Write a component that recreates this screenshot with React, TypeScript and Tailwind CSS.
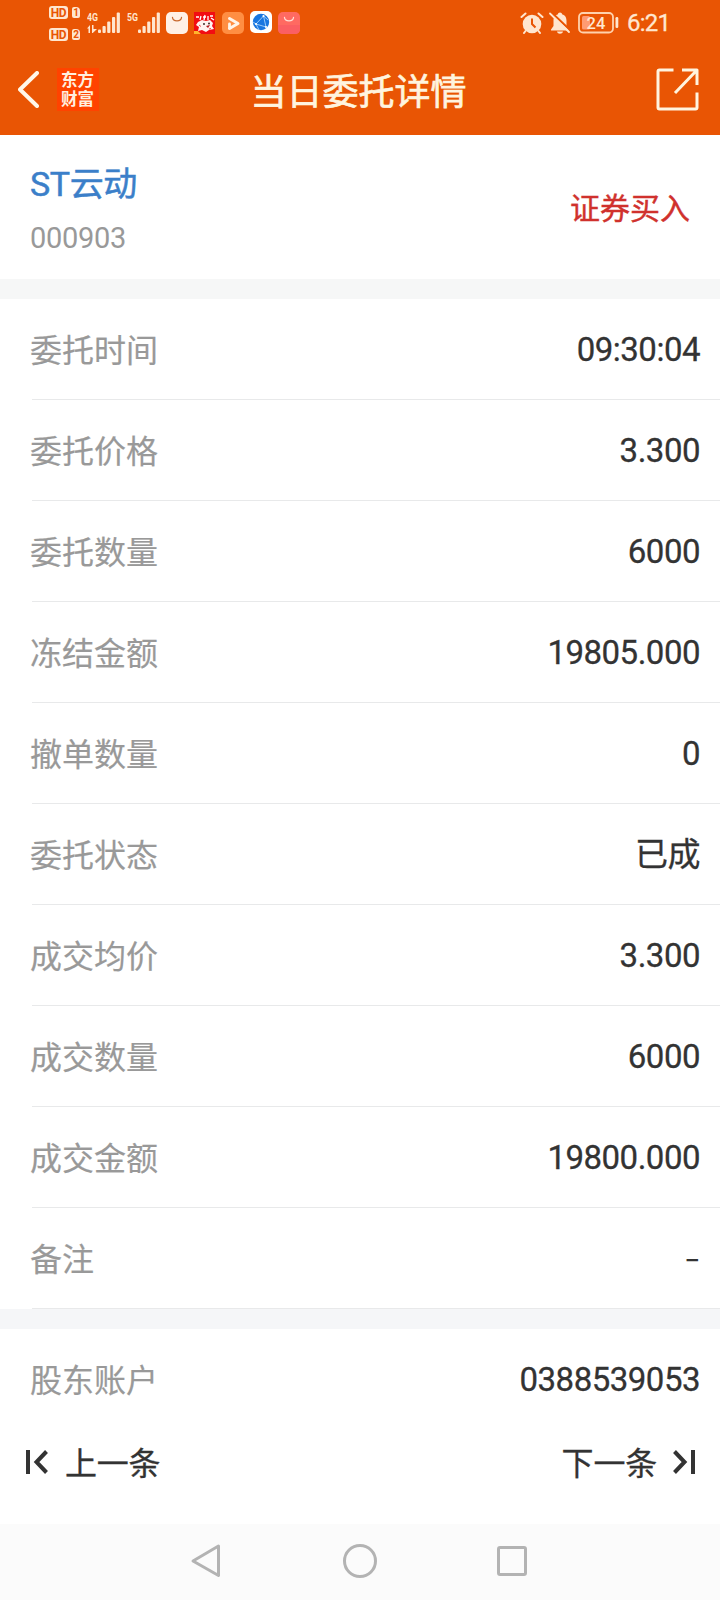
type DetailRow = { label: string; value: string };

const rows: DetailRow[] = [
  { label: "委托时间", value: "09:30:04" },
  { label: "委托价格", value: "3.300" },
  { label: "委托数量", value: "6000" },
  { label: "冻结金额", value: "19805.000" },
  { label: "撤单数量", value: "0" },
  { label: "委托状态", value: "已成" },
  { label: "成交均价", value: "3.300" },
  { label: "成交数量", value: "6000" },
  { label: "成交金额", value: "19800.000" },
  { label: "备注", value: "-" },
];

function HdBadge({ sim }: { sim: string }) {
  return (
    <div className="flex h-[13px] items-center gap-1 font-[Roboto,sans-serif] text-[#e95504]">
      <span className="flex h-[13px] w-[19px] items-center justify-center rounded-[3px] bg-[#ffe6cf] text-[12px] font-bold leading-none tracking-[-0.5px]">
        HD
      </span>
      <span className="flex h-[11px] w-2 items-center justify-center rounded-[2px] rounded-tr-[4px] bg-[#ffe6cf] text-[10px] font-bold leading-none">
        {sim}
      </span>
    </div>
  );
}

function Signal({ label, arrows }: { label: string; arrows?: boolean }) {
  return (
    <svg width="34" height="30" viewBox="0 -6 34 30" fill="#ffe6cf" className="-mt-1.5">
      <text x="0" y="8.500" fontFamily="Roboto, sans-serif" fontSize="11" fontWeight="700" textLength="11" lengthAdjust="spacingAndGlyphs">
        {label}
      </text>
      {arrows && <path d="M0 16.500L3 13V21H1.500V16.500ZM5 13H6.500V17H10L5.800 21H5Z" />}
      <rect x="11" y="17.500" width="3" height="3.500" rx="1" />
      <rect x="15.500" y="14" width="3.200" height="7" rx="1" />
      <rect x="20.200" y="9.500" width="3.200" height="11.500" rx="1" />
      <rect x="25" y="5" width="3.200" height="16" rx="1" />
      <rect x="29.700" y="0.500" width="3.200" height="20.500" rx="1" />
    </svg>
  );
}

function AppIcons() {
  return (
    <div className="flex gap-1.5">
      <svg width="22" height="22" viewBox="0 0 22 22">
        <rect width="22" height="22" rx="5" fill="#fff0e6" />
        <path d="M6.500 5.500C7 10 15 10 15.500 5.500" fill="none" stroke="#c9692f" strokeWidth="1.300" strokeLinecap="round" />
      </svg>
      <svg width="22" height="22" viewBox="0 0 22 22">
        <rect width="21" height="22" fill="#f20d12" />
        <path d="M2 5H5M7 4L6 8M9 5H12M11 3L10 8M14 4V8M16 4H19M17 6L20 8" stroke="#fff" strokeWidth="1.300" />
        <path d="M4 10L8 8L12 9L16 8L19 11L18 14L20 17L15 18L12 20L8 18L4 19L5 15L2 13Z" fill="#fff3f0" />
        <circle cx="10" cy="12" r="0.900" fill="#2b1715" />
        <circle cx="15" cy="11.500" r="0.900" fill="#2b1715" />
        <path d="M12 14L16 13L14 16Z" fill="#b3161b" />
        <path d="M5 13L7 14.500M15 17L17 16.500" stroke="#ed4b50" strokeWidth="1" />
        <path d="M0 19H4L7 22H0Z" fill="#ffb52b" />
      </svg>
      <svg width="22" height="22" viewBox="0 0 22 22">
        <rect width="22" height="22" rx="5" fill="#ff8e42" />
        <path d="M7.500 6.500L16 11.500L7.500 16.500" fill="none" stroke="#fff5e9" strokeWidth="3" strokeLinejoin="round" strokeLinecap="round" />
        <path d="M7.500 12V16" stroke="#fff5e9" strokeWidth="2.800" strokeLinecap="round" />
      </svg>
      <svg width="22" height="22" viewBox="0 0 22 22" className="-mt-px">
        <rect width="22" height="22" rx="5" fill="#fff" />
        <circle cx="11" cy="11" r="8.200" fill="#1976e0" />
        <path d="M6 13L13.500 5L16 16ZM3 11L6 13L9 19M13.500 5L18 9" fill="none" stroke="#b8deff" strokeWidth="0.800" />
        <g fill="#fff">
          <circle cx="6" cy="13" r="1.100" />
          <circle cx="13.500" cy="5" r="1.100" />
          <circle cx="16" cy="16" r="1.100" />
        </g>
      </svg>
      <svg width="22" height="22" viewBox="0 0 22 22">
        <rect width="22" height="22" rx="5" fill="#ff6a61" />
        <path d="M0 13H22V17Q22 22 17 22H5Q0 22 0 17Z" fill="#fb5f62" />
        <path d="M6.500 5.500C7 10 15 10 15.500 5.500" fill="none" stroke="#ffe0d4" strokeWidth="1.300" strokeLinecap="round" />
      </svg>
    </div>
  );
}

function StatusBar() {
  return (
    <div className="flex h-[46px] items-start justify-between pl-[49px] pr-[51px]">
      <div className="flex items-start">
        <div className="mt-1.5 flex flex-col gap-[9px]">
          <HdBadge sim="1" />
          <HdBadge sim="2" />
        </div>
        <div className="ml-[7px] mt-3 flex items-start gap-[6px]">
          <Signal label="4G" arrows />
          <Signal label="5G" />
        </div>
        <div className="ml-[5px] mt-3">
          <AppIcons />
        </div>
      </div>
      <div className="mt-3 flex items-start text-[#ffe6cf]">
        <svg width="24" height="22" viewBox="0 0 24 22" fill="none" stroke="#ffe6cf">
          <circle cx="12" cy="12" r="9.300" fill="#ffe6cf" stroke="none" />
          <path d="M1.500 5L5.500 1.500M22.500 5L18.500 1.500M5.500 19L4 21M18.500 19L20 21" strokeWidth="2" strokeLinecap="round" />
          <path d="M12 6.500V12L15.500 15.500" stroke="#e95504" strokeWidth="2" />
        </svg>
        <svg width="22" height="22" viewBox="0 0 22 22" className="ml-[5px]">
          <path d="M11 0.500C12.300 0.500 13 1.300 13 2.300C16.500 3.200 17.500 6 17.500 9V14L20 17.500V18.500H2V17.500L4.500 14V9C4.500 6 5.500 3.200 9 2.300C9 1.300 9.700 0.500 11 0.500ZM8 19.500H14C13.500 22.500 8.500 22.500 8 19.500Z" fill="#ffe6cf" />
          <path d="M2.500 0.500L22 19" stroke="#e95504" strokeWidth="2.200" />
          <path d="M1 1.500L20 20" stroke="#ffe6cf" strokeWidth="1.800" strokeLinecap="round" />
        </svg>
        <svg width="42" height="22" viewBox="0 0 42 22" className="ml-[7px]">
          <rect x="1" y="1" width="34" height="19.500" rx="4" fill="none" stroke="#ffd2ad" strokeWidth="1.800" />
          <rect x="4" y="4" width="8" height="13.500" rx="1.500" fill="#ff9b72" />
          <rect x="37.500" y="5" width="2.800" height="11" rx="1.300" fill="#ffe6cf" />
          <text x="8.500" y="16.500" fontFamily="Roboto, sans-serif" fontSize="16.500" fontWeight="500" fill="#ffe6cf">
            24
          </text>
        </svg>
        <span className="-mt-px ml-[7px] w-[42px] whitespace-nowrap font-[Roboto,sans-serif] text-[24px] leading-6 tracking-[-0.8px] [-webkit-text-stroke:0.3px]">6:21</span>
      </div>
    </div>
  );
}

function Header() {
  return (
    <header className="h-[135px] shrink-0 bg-[#e95504]">
      <StatusBar />
      <div className="grid h-[87px] grid-cols-[1fr_auto_1fr] items-center pl-[18px] pr-[21px]">
        <div className="flex items-center">
          <svg width="21" height="37" viewBox="0 0 21 37" fill="none" stroke="#fff8ea" strokeWidth="4" strokeLinecap="round" strokeLinejoin="round">
            <path d="M19 2L2 18.500L19 35" />
          </svg>
          <div className="ml-[18px] flex h-[43px] w-[42px] items-center justify-center bg-[#ff4300] pb-px pr-px">
            <span className="w-[33px] break-all text-[16.500px] font-bold leading-[19.500px] text-[#ffefdf]">东方财富</span>
          </div>
        </div>
        <h1 className="pb-0.5 text-[36px] leading-none text-[#fff4df] [-webkit-text-stroke:0.7px]">当日委托详情</h1>
        <svg width="43" height="43" viewBox="0 0 43 43" className="justify-self-end" fill="none" stroke="#fff4df" strokeWidth="3" strokeLinejoin="round">
          <path d="M17.500 2H3.500Q2 2 2 3.500V39.500Q2 41 3.500 41H39.500Q41 41 41 39.500V24.500" />
          <path d="M26 2H41V17M41 2L19 25" />
        </svg>
      </div>
    </header>
  );
}

function Value({ children }: { children: string }) {
  if (children === "-") {
    return <span className="origin-right scale-x-140 pb-1 text-[#333]">-</span>;
  }
  return (
    <span className="pt-[3px] font-[Roboto,'Noto_Sans_CJK_SC',sans-serif] text-[33px] tracking-[-0.5px] text-[#333] [-webkit-text-stroke:0.3px]">
      {children}
    </span>
  );
}

function Row({ label, value }: DetailRow) {
  return (
    <div className="flex h-[101px] flex-col">
      <div className="flex flex-1 items-center justify-between pb-0.5 pl-[30px] pr-5 text-[32px] leading-none">
        <span className="text-[#999] [-webkit-text-stroke:0.2px]">{label}</span>
        <Value>{value}</Value>
      </div>
      <div className="ml-8 h-px bg-[#e8e9ea]" />
    </div>
  );
}

function Pager() {
  return (
    <div className="flex h-[94px] shrink-0 items-start justify-between pl-[25px] pr-6 pt-[15px] text-[32px] leading-none text-[#333] [-webkit-text-stroke:0.3px]">
      <div className="flex items-center">
        <svg width="24" height="24" viewBox="0 0 24 24" className="mt-px" fill="none" stroke="currentColor" strokeWidth="4">
          <path d="M3 0V24M21.500 1.500L11.500 12L21.500 22.500" />
        </svg>
        <span className="ml-4 tracking-[-0.2px]">上一条</span>
      </div>
      <div className="flex items-center">
        <span className="mr-[15px] tracking-[-0.2px]">下一条</span>
        <svg width="24" height="24" viewBox="0 0 24 24" className="mt-px" fill="none" stroke="currentColor" strokeWidth="4">
          <path d="M2.500 1.500L12.500 12L2.500 22.500M21 0V24" />
        </svg>
      </div>
    </div>
  );
}

function SystemNav() {
  return (
    <nav className="flex h-[76px] shrink-0 items-center justify-between bg-[#fbfbfb] pb-0.5 pl-[190px] pr-[193px]">
      <svg width="32" height="36" viewBox="0 0 32 36" fill="none" stroke="#b3b3b3" strokeWidth="3" strokeLinejoin="round">
        <path d="M28.500 3L3 18L28.500 32.500Z" />
      </svg>
      <div className="size-[34px] rounded-full border-3 border-[#b3b3b3]" />
      <div className="size-[30px] rounded-[3px] border-3 border-[#b3b3b3]" />
    </nav>
  );
}

export default function App() {
  return (
    <div className="flex h-[1600px] w-[720px] flex-col overflow-hidden bg-white font-['Noto_Sans_CJK_SC',sans-serif]">
      <Header />
      <section className="flex h-36 shrink-0 items-center justify-between pl-[30px] pr-[30px]">
        <div className="flex flex-col pt-2">
          <span className="font-[Roboto,'Noto_Sans_CJK_SC',sans-serif] text-[34px] leading-[50px] tracking-[-0.4px] text-[#3b7fc9] [-webkit-text-stroke:0.5px]">ST云动</span>
          <span className="mt-1 font-[Roboto,sans-serif] text-[29px] leading-[50px] tracking-[-0.3px] text-[#999]">000903</span>
        </div>
        <span className="pb-0.5 text-[30px] leading-none text-[#d0312d] [-webkit-text-stroke:0.4px]">证券买入</span>
      </section>
      <div className="h-5 shrink-0 bg-[#f6f7f7]" />
      <section className="shrink-0">
        {rows.map((row) => (
          <Row key={row.label} label={row.label} value={row.value} />
        ))}
      </section>
      <div className="h-5 shrink-0 bg-[#f5f6f8]" />
      <div className="flex h-[101px] shrink-0 items-center justify-between pb-[3px] pl-[30px] pr-5 text-[32px] leading-none">
        <span className="text-[#999] [-webkit-text-stroke:0.2px]">股东账户</span>
        <Value>0388539053</Value>
      </div>
      <Pager />
      <SystemNav />
    </div>
  );
}
